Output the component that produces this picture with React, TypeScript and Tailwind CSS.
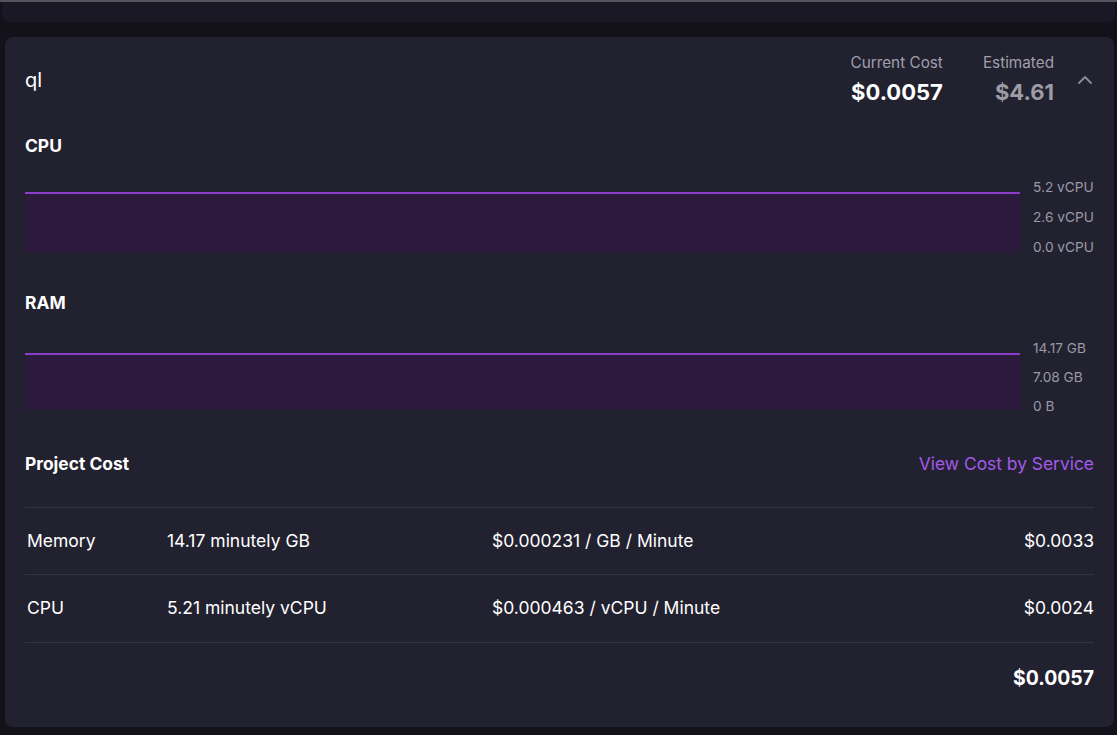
import React from "react";

const font = { fontFamily: "Inter, 'Noto Sans', sans-serif" };

function Chart({ labels, fill, gap }: { labels: string[]; fill: string; gap: string }) {
  return (
    <div className="flex items-start">
      <div className="flex-1 flex flex-col pt-[15px]">
        <div className="h-[2px] bg-[#8a3dcb]" />
        <div className={`${fill} bg-[#2b1a3b]`} />
      </div>
      <div className={`w-[74px] pl-[13px] flex flex-col ${gap} text-[13.7px] leading-[20px] text-[#9a99a6]`}>
        {labels.map((l) => (
          <div key={l}>{l}</div>
        ))}
      </div>
    </div>
  );
}

export default function App() {
  const rows = [
    ["Memory", "14.17 minutely GB", "$0.000231 / GB / Minute", "$0.0033", "h-[67px]"],
    ["CPU", "5.21 minutely vCPU", "$0.000463 / vCPU / Minute", "$0.0024", "h-[68px]"],
  ];
  return (
    <div className="min-h-[735px] bg-[#13121b] text-white" style={font}>
      <div className="h-[2px] bg-[#55545c]" />
      <div className="mx-[2px] h-[20px] rounded-b-[8px] bg-[#191824]" />
      <div className="mr-[3px] mt-[15px] ml-[5px] rounded-[8px] bg-[#222130] px-[20px] pt-[15px] pb-[13px]">
        <div className="flex items-start justify-between h-[82px]">
          <div className="text-[20px] leading-[28px] pt-[14px]">ql</div>
          <div className="flex items-start pt-[1px]">
            <div className="flex flex-col items-end">
              <div className="text-[15.3px] leading-[20px] text-[#a09fab]">Current Cost</div>
              <div className="mt-[3px] text-[22px] leading-[32px] font-bold">$0.0057</div>
            </div>
            <div className="flex flex-col items-end ml-[40px]">
              <div className="text-[15.3px] leading-[20px] text-[#a09fab]">Estimated</div>
              <div className="mt-[3px] text-[22px] leading-[32px] font-bold text-[#9c9ba6]">$4.61</div>
            </div>
            <div className="w-[43px] flex justify-end pt-[15px] -mr-[3px]">
              <svg width="24" height="24" viewBox="0 0 24 24" fill="none" stroke="#8c8b97" strokeWidth="1.8" strokeLinecap="round" strokeLinejoin="round">
                <path d="M18 15l-6-6-6 6" />
              </svg>
            </div>
          </div>
        </div>

        <div className="text-[17.4px] leading-[24px] font-bold">CPU</div>
        <div className="mt-[19px]">
          <Chart labels={["5.2 vCPU", "2.6 vCPU", "0.0 vCPU"]} fill="h-[59px]" gap="gap-[10px]" />
        </div>

        <div className="mt-[34px] text-[17.4px] leading-[24px] font-bold">RAM</div>
        <div className="mt-[23px]">
          <Chart labels={["14.17 GB", "7.08 GB", "0 B"]} fill="h-[55px]" gap="gap-[9px]" />
        </div>

        <div className="mt-[36px] flex items-center justify-between">
          <div className="text-[17.4px] leading-[24px] font-bold">Project Cost</div>
          <div className="text-[17.4px] leading-[24px] text-[#a35ae8]">View Cost by Service</div>
        </div>

        <div className="mt-[31px]">
          {rows.map((r) => (
            <div key={r[0]} className={`flex items-center ${r[4]} border-t border-[#35343f] text-[17.5px] pl-[2px]`}>
              <div className="w-[140px]">{r[0]}</div>
              <div className="w-[325px]">{r[1]}</div>
              <div className="flex-1">{r[2]}</div>
              <div className="text-right">{r[3]}</div>
            </div>
          ))}
          <div className="flex items-center justify-end h-[72px] border-t border-[#35343f] text-[19.4px] font-bold">
            $0.0057
          </div>
        </div>
      </div>
    </div>
  );
}
